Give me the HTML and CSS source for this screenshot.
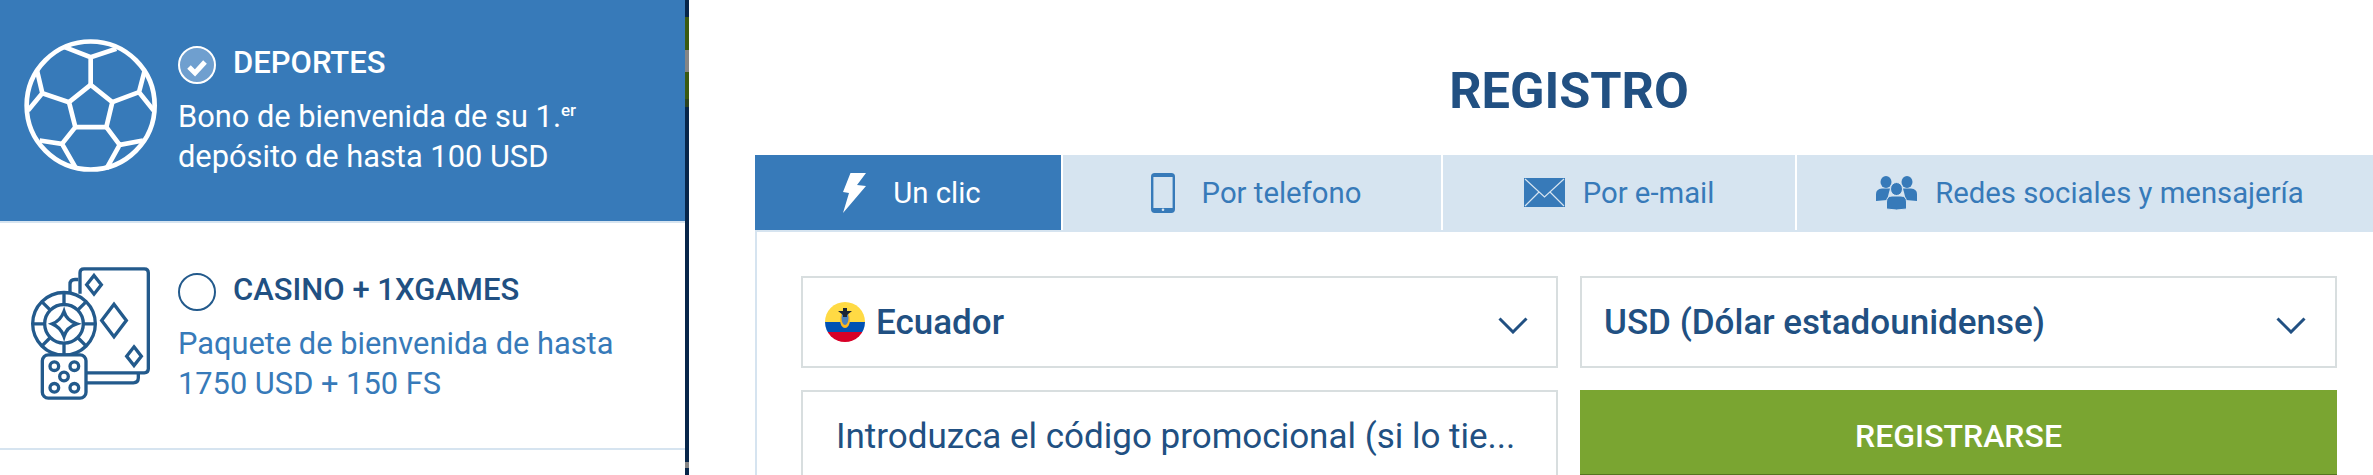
FILE: index.html
```html
<!DOCTYPE html>
<html lang="es">
<head>
    <meta charset="UTF-8">
    <title>Registro</title>
    <link rel="stylesheet" href="styles.css">
</head>
<body>
    <aside class="bonus-list">
        <div class="bonus bonus-active">
            <svg class="bonus-icon" viewBox="40 35 405 410" fill="none" stroke="#fff" stroke-width="14">
                <circle cx="243" cy="240" r="192"/>
                <path d="M243 178L308 230L290 305H197L178 230Z"/>
                <path d="M243 178V95M165 65L243 95L320 70"/>
                <path d="M178 230L98 203M82 135L98 203L55 255"/>
                <path d="M308 230L388 200M405 135L388 200L432 255"/>
                <path d="M197 305L157 355M90 345L157 355L200 430"/>
                <path d="M290 305L330 358M400 345L330 358L290 430"/>
            </svg>
            <div class="bonus-text">
                <div class="bonus-head">
                    <svg class="radio" viewBox="0 0 38 38">
                        <circle cx="19" cy="19" r="18" fill="#6f9fcf" stroke="#fff" stroke-width="2"/>
                        <path d="M11 21L17 27L27 16" fill="none" stroke="#fff" stroke-width="5"/>
                    </svg>
                    <span>DEPORTES</span>
                </div>
                <p>Bono de bienvenida de su 1.<sup>er</sup><br>depósito de hasta 100 USD</p>
            </div>
        </div>
        <div class="bonus bonus-second">
            <svg class="bonus-icon bonus-icon-casino" viewBox="45 35 360 398" fill="none" stroke="#235a8c" stroke-width="10">
                <path d="M195 115V52Q195 40 207 40H388Q400 40 400 52V340Q400 352 388 352H215"/>
                <path d="M190 72H180Q165 72 165 87V112M215 382H355Q370 382 370 367V352"/>
                <path d="M237 60L259 88L237 116L215 88Z"/>
                <path d="M297 146L334 195L297 244L260 195Z"/>
                <path d="M357 274L379 302L357 330L335 302Z"/>
                <circle cx="147" cy="205" r="94" fill="#fff"/>
                <circle cx="147" cy="205" r="58"/>
                <path d="M147 111V147M147 263V299M53 205H89M205 205H241M81 139L106 164M213 139L188 164M81 271L106 246M213 271L188 246"/>
                <path d="M147 168Q155 195 185 205Q155 215 147 243Q137 215 112 205Q137 195 147 168Z"/>
                <rect x="82" y="298" width="131" height="130" rx="18" fill="#fff"/>
                <circle cx="118" cy="332" r="13"/>
                <circle cx="178" cy="332" r="13"/>
                <circle cx="147" cy="363" r="13"/>
                <circle cx="118" cy="397" r="13"/>
                <circle cx="178" cy="397" r="13"/>
            </svg>
            <div class="bonus-text">
                <div class="bonus-head">
                    <svg class="radio" viewBox="0 0 38 38">
                        <circle cx="19" cy="19" r="18" fill="none" stroke="#235a8c" stroke-width="2"/>
                    </svg>
                    <span>CASINO + 1XGAMES</span>
                </div>
                <p>Paquete de bienvenida de hasta<br>1750 USD + 150 FS</p>
            </div>
        </div>
    </aside>

    <div class="edge">
        <i class="edge-a"></i>
        <i class="edge-green edge-b"></i>
        <i class="edge-grey edge-c"></i>
        <i class="edge-green edge-d"></i>
        <i class="edge-check edge-e"></i>
        <i class="edge-f"></i>
        <i class="edge-grey edge-g"></i>
    </div>

    <main class="register">
        <h1>REGISTRO</h1>
        <div class="tabs">
            <div class="tab tab-active">
                <svg class="tab-bolt" viewBox="0 0 23 40"><path d="M7.5 0H23L14 12L23 13L0 40L6 20L0 19Z" fill="#fff"/></svg>
                <span>Un clic</span>
            </div>
            <div class="tab">
                <svg class="tab-phone" viewBox="0 0 24 40">
                    <rect x="1.2" y="1.2" width="21.6" height="37.6" rx="2.5" fill="none" stroke="#377ab9" stroke-width="2.4"/>
                    <path d="M1 4H23V1H1ZM1 35H23V39H1Z" fill="#377ab9"/>
                    <circle cx="12" cy="36.8" r="1.3" fill="#d6e4f0"/>
                </svg>
                <span>Por telefono</span>
            </div>
            <div class="tab">
                <svg class="tab-mail" viewBox="0 0 41 29">
                    <rect width="41" height="29" fill="#377ab9"/>
                    <path d="M1 1L20.5 19L40 1M1 28L15 14M40 28L26 14" fill="none" stroke="#d6e4f0" stroke-width="1.2"/>
                </svg>
                <span>Por e-mail</span>
            </div>
            <div class="tab">
                <svg class="tab-people" viewBox="0 0 41 34" fill="#377ab9">
                    <ellipse cx="10" cy="6" rx="5.5" ry="6"/>
                    <ellipse cx="31" cy="6" rx="5.5" ry="6"/>
                    <path d="M0 25V18Q0 13 6 12.500H14L11 24Z"/>
                    <path d="M41 25V18Q41 13 35 12.500H27L30 24Z"/>
                    <ellipse cx="20.500" cy="13" rx="6" ry="6.500" stroke="#d6e4f0"/>
                    <path d="M10.500 33V26Q10.500 20 16 20H25Q30.500 20 30.500 26V33Q20.500 35 10.500 33Z" stroke="#d6e4f0"/>
                </svg>
                <span>Redes sociales y mensajería</span>
            </div>
        </div>

        <div class="form-panel">
            <div class="field field-country">
                <svg class="flag" viewBox="0 0 40 40">
                    <clipPath id="flag-clip"><circle cx="20" cy="20" r="20"/></clipPath>
                    <g clip-path="url(#flag-clip)">
                        <rect width="40" height="20" fill="#ffda44"/>
                        <rect y="20" width="40" height="10" fill="#0052b4"/>
                        <rect y="30" width="40" height="10" fill="#d80027"/>
                    </g>
                    <ellipse cx="20" cy="18" rx="5" ry="8" fill="#ffb81c"/>
                    <ellipse cx="20" cy="16" rx="3.500" ry="7" fill="#4a82c0"/>
                    <path d="M13 9H27L22 13V15H18V13Z" fill="#1a2433"/>
                    <path d="M18 6H22V10H18Z" fill="#1a2433"/>
                </svg>
                <span class="field-value">Ecuador</span>
                <svg class="chevron" viewBox="0 0 30 17"><path d="M1.500 1.500L15 15L28.500 1.500" fill="none" stroke="#215082" stroke-width="3"/></svg>
            </div>
            <div class="field field-currency">
                <span class="field-value">USD (Dólar estadounidense)</span>
                <svg class="chevron" viewBox="0 0 30 17"><path d="M1.500 1.500L15 15L28.500 1.500" fill="none" stroke="#215082" stroke-width="3"/></svg>
            </div>
            <div class="field field-promo">
                <span>Introduzca el código promocional (si lo tie...</span>
            </div>
            <button class="submit">REGISTRARSE</button>
        </div>
    </main>
</body>
</html>
```

FILE: styles.css
```css
* {
    box-sizing: border-box;
}

html, body {
    margin: 0;
    height: 475px;
    overflow: hidden;
}

body {
    display: flex;
    font-family: 'Roboto', 'Liberation Sans', sans-serif;
    background-color: #fff;
}

/* colonne des bonus */
.bonus-list {
    flex: 0 0 685px;
}

.bonus {
    display: flex;
    align-items: flex-start;
    padding-left: 23px;
}

.bonus-active {
    height: 223px;
    padding-top: 37px;
    background-color: #377ab9;
    border-bottom: 2px solid #d6e4f0;
    color: #fff;
}

.bonus-second {
    height: 227px;
    padding-top: 27px;
    border-bottom: 2px solid #d6e4f0;
    color: #377ab9;
}

.bonus-icon {
    flex: 0 0 135px;
    width: 135px;
    height: 137px;
    margin-right: 20px;
}

.bonus-icon-casino {
    flex-basis: 120px;
    width: 120px;
    height: 133px;
    margin: 17px 28px 0 7px;
}

.bonus-text {
    padding-top: 9px;
}

.bonus-second .bonus-text {
    padding-top: 23px;
}

.bonus-head {
    display: flex;
    align-items: center;
    gap: 17px;
    height: 38px;
    font-size: 31px;
    font-weight: 500;
    line-height: 38px;
}

.bonus-head span {
    margin-bottom: 4px;
}

.bonus-second .bonus-head {
    color: #215082;
}

.radio {
    width: 38px;
    height: 38px;
}

.bonus-text p {
    margin: 13px 0 0;
    font-size: 30.8px;
    line-height: 40px;
}

.bonus-text sup {
    font-size: 17px;
    font-weight: 500;
    line-height: 0;
}

/* bande sombre entre les deux colonnes */
.edge {
    flex: 0 0 4px;
    display: flex;
    flex-direction: column;
    background-color: #07264a;
}

.edge-a {
    height: 17px;
}

.edge-b {
    height: 33px;
}

.edge-c {
    height: 22px;
}

.edge-d {
    height: 27px;
}

.edge-e {
    height: 8px;
}

.edge-f {
    height: 355px;
}

.edge-g {
    height: 6px;
}

.edge-green {
    background-color: #3a5a12;
}

.edge-grey {
    background-color: #858585;
}

.edge-check {
    background-color: #2c4420;
}

/* formulaire */
.register {
    flex: 0 0 auto;
    width: 1694px;
    padding-left: 66px;
}

h1 {
    margin: 0;
    height: 155px;
    padding-top: 62px;
    text-align: center;
    font-size: 50.5px;
    font-weight: 700;
    line-height: 58px;
    color: #215082;
}

.tabs {
    display: grid;
    grid-template-columns: 306px 378px 352px 1fr;
    column-gap: 2px;
    height: 75px;
}

.tab {
    display: flex;
    align-items: center;
    justify-content: center;
    gap: 27px;
    padding-left: 8px;
    background-color: #d6e4f0;
    color: #377ab9;
    font-size: 29.3px;
}

.tab-active {
    background-color: #377ab9;
    color: #fff;
}

.tab:nth-child(3) {
    gap: 18px;
    padding-left: 0;
}

.tab:nth-child(4) {
    gap: 18px;
    padding-left: 0;
}

.tab-bolt {
    width: 23px;
    height: 40px;
}

.tab-phone {
    width: 24px;
    height: 40px;
}

.tab-mail {
    width: 41px;
    height: 29px;
}

.tab-people {
    width: 41px;
    height: 34px;
}

.form-panel {
    display: grid;
    grid-template-columns: 757px 757px;
    gap: 22px;
    align-items: start;
    padding: 44px;
    border-top: 2px solid #d6e4f0;
    border-left: 2px solid #d6e4f0;
    color: #215082;
}

.field {
    display: flex;
    align-items: center;
    height: 92px;
    border: 2px solid #d8dedf;
    font-size: 35px;
}

.field-value {
    flex: 1;
    font-size: 35px;
    font-weight: 500;
}

.field-country {
    padding: 0 28px 0 22px;
}

.field-currency {
    padding: 0 29px 0 22px;
}

.field-promo {
    padding-left: 33px;
    white-space: nowrap;
}

.flag {
    width: 40px;
    height: 40px;
    margin-right: 11px;
}

.chevron {
    width: 30px;
    height: 17px;
    margin-top: 6px;
}

.submit {
    height: 85px;
    padding: 8px 0 0;
    border: none;
    border-bottom: 1px solid #55751f;
    background-color: #7aa531;
    color: #fff;
    font-family: inherit;
    font-size: 32px;
    font-weight: 500;
}
```
